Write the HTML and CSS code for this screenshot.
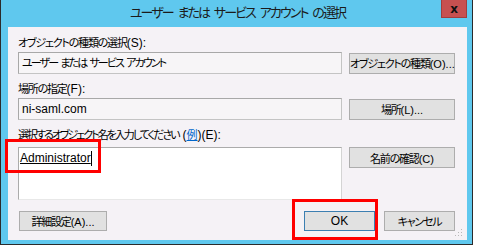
FILE: index.html
```html
<!DOCTYPE html>
<html lang="ja">
<head>
    <meta charset="UTF-8">
    <title>ユーザー または サービス アカウント の選択</title>
    <link rel="stylesheet" href="styles.css">
</head>
<body>

    <div class="window">
        <div class="titlebar">
            <div class="title">ユーザー または サービス アカウント の選択</div>
            <button type="button" class="close-btn">x</button>
        </div>

        <div class="content">
            <div class="field-label jp">オブジェクトの種類の選択<span class="key">(S):</span></div>
            <div class="row">
                <div class="textbox jp">ユーザー または サービス アカウント</div>
                <button type="button" class="btn side-btn jp">オブジェクトの種類<span class="key">(O)...</span></button>
            </div>

            <div class="field-label jp">場所の指定<span class="key">(F):</span></div>
            <div class="row">
                <div class="textbox">ni-saml.com</div>
                <button type="button" class="btn side-btn jp">場所<span class="key">(L)...</span></button>
            </div>

            <div class="field-label jp tight">選択するオブジェクト名を入力してください <span class="key">(<span class="link">例</span>)(E):</span></div>
            <div class="row row-top">
                <div class="namebox"><span class="resolved">Administrator</span><span class="caret"></span></div>
                <button type="button" class="btn side-btn jp">名前の確認<span class="key">(C)</span></button>
            </div>

            <div class="footer">
                <button type="button" class="btn advanced-btn jp">詳細設定<span class="key">(A)...</span></button>
                <div class="spacer"></div>
                <button type="button" class="btn footer-btn default">OK</button>
                <button type="button" class="btn footer-btn jp">キャンセル</button>
            </div>

            <!-- resize grip -->
            <svg class="grip" width="8" height="8" viewBox="0 0 8 8">
                <rect x="6" y="0" width="1" height="1" fill="#b8b8b8"/>
                <rect x="3" y="3" width="1" height="1" fill="#b8b8b8"/>
                <rect x="6" y="3" width="1" height="1" fill="#b8b8b8"/>
                <rect x="0" y="6" width="1" height="1" fill="#b8b8b8"/>
                <rect x="3" y="6" width="1" height="1" fill="#b8b8b8"/>
                <rect x="6" y="6" width="1" height="1" fill="#b8b8b8"/>
            </svg>
        </div>
    </div>

    <!-- annotation marks -->
    <div class="mark mark-name"></div>
    <div class="mark mark-ok"></div>

</body>
</html>
```

FILE: styles.css
```css
* {
    margin: 0;
    padding: 0;
    box-sizing: border-box;
}

body {
    position: relative;
    width: 480px;
    height: 246px;
    background: #ffffff;
    font-family: 'Liberation Sans', 'Noto Sans CJK JP', sans-serif;
    font-size: 12px;
    color: #000;
    font-feature-settings: "palt";
}

/* Japanese text is narrower in the original UI font */
.jp {
    font-size: 11px;
    letter-spacing: -1.2px;
    word-spacing: 3px;
}

.jp.tight {
    letter-spacing: -2px;
}

.key {
    font-size: 12px;
    letter-spacing: 0;
}

.window {
    width: 473px;
    height: 245px;
    background: #5fc8ee;
    border: 1px solid #2b2b2b;
    border-top: none;
    padding: 0 5px 4px 7px;
    display: flex;
    flex-direction: column;
}

.titlebar {
    height: 27px;
    display: flex;
    align-items: flex-start;
}

.title {
    flex: 1;
    text-align: center;
    padding-left: 26px;
    padding-top: 4px;
    font-size: 13px;
    letter-spacing: -1.9px;
    word-spacing: 3px;
    line-height: 18px;
    color: #1b1b1b;
}

.close-btn {
    width: 26px;
    height: 18px;
    background: #c75050;
    border: 1px solid #a23d3d;
    border-top: none;
    font-family: 'DejaVu Sans', sans-serif;
    font-weight: bold;
    font-size: 12px;
    line-height: 14px;
    color: #111;
}

.content {
    position: relative;
    flex: 1;
    background: #f5f2f6;
    padding: 9px 12px 0 10px;
    display: flex;
    flex-direction: column;
}

.field-label {
    line-height: 14px;
    height: 14px;
    white-space: nowrap;
}

.link {
    color: #0066cc;
    text-decoration: underline;
    font-size: 11px;
}

.row {
    display: flex;
    align-items: center;
    gap: 7px;
    margin-top: 2px;
    margin-bottom: 8px;
}

.row-top {
    align-items: flex-start;
    margin-top: 5px;
    margin-bottom: 10px;
}

.textbox {
    flex: 1;
    height: 22px;
    border: 1px solid #a8a8a8;
    border-right-color: #c4c4c4;
    border-bottom-color: #c4c4c4;
    background: #f7f5f7;
    padding: 0 3px;
    line-height: 20px;
    white-space: nowrap;
}

.textbox.jp {
    letter-spacing: -1.9px;
    word-spacing: 2px;
}

.namebox {
    flex: 1;
    height: 53px;
    background: #ffffff;
    border: 1px solid #ababab;
    border-right-color: #d4d4d4;
    border-bottom-color: #e8e8e8;
    padding: 3px 1px;
    line-height: 14px;
    display: flex;
    align-items: flex-start;
}

.resolved {
    text-decoration: underline;
}

.caret {
    width: 1px;
    height: 15px;
    background: #000;
}

.btn {
    height: 21px;
    background: #e1e1e1;
    border: 1px solid #adadad;
    font-family: inherit;
    font-size: 12px;
    font-feature-settings: "palt";
    color: #000;
    white-space: nowrap;
}

.btn.jp {
    font-size: 11px;
}

.btn .key {
    font-size: 11px;
}

.side-btn {
    width: 106px;
    flex-shrink: 0;
}

.footer {
    display: flex;
    align-items: center;
    gap: 9px;
    margin-top: 1px;
}

.footer .btn {
    height: 20px;
}

.advanced-btn {
    width: 88px;
    margin-left: 1px;
}

.spacer {
    flex: 1;
}

.footer-btn {
    width: 71px;
}

.btn.default {
    border-color: #3c7fb1;
}

.grip {
    position: absolute;
    right: 4px;
    bottom: 3px;
}

.mark {
    position: absolute;
    border: 3px solid #ff0000;
}

.mark-name {
    left: 5px;
    top: 139px;
    width: 96px;
    height: 34px;
}

.mark-ok {
    left: 292px;
    top: 199px;
    width: 86px;
    height: 41px;
}
```
